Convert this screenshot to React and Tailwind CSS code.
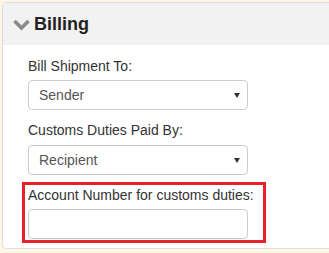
import React from "react";

function Caret() {
  return (
    <svg width="6" height="5" viewBox="0 0 6 5" className="block">
      <path d="M0 0 H6 L3 5 Z" fill="#333" />
    </svg>
  );
}

function SelectBox({ value }) {
  return (
    <div className="flex h-[30px] w-[220px] items-center justify-between rounded-[4px] border border-[#cccccc] bg-white pl-[10px] pr-[7px] text-[14px] text-[#555555]">
      <span>{value}</span>
      <Caret />
    </div>
  );
}

export default function App() {
  return (
    <div
      className="h-[253px] w-[329px] overflow-hidden bg-[#fcf7e4] pl-[2px] pt-[2px]"
      style={{ fontFamily: '"Liberation Sans", Arial, sans-serif' }}
    >
      <div className="w-[340px] rounded-l-[4px] border border-[#dddddd] bg-white">
        <div className="flex h-[42px] items-center bg-[#f2f2f2] pl-[10px]">
          <svg width="17" height="12" viewBox="0 0 17 12" className="mr-[4px] mt-[2px]">
            <polyline
              points="1.5,2 8.5,9 15.5,2"
              fill="none"
              stroke="#8a8a8a"
              strokeWidth="3.6"
              strokeLinecap="butt"
            />
          </svg>
          <span className="text-[18px] font-bold leading-[42px] text-[#222222]">Billing</span>
        </div>
        <div className="pb-[5px] pl-[19px] pt-[11px]">
          <div className="pl-[6px]">
            <div className="mb-[4px] text-[14px] leading-[20px] text-[#333333]">Bill Shipment To:</div>
            <SelectBox value="Sender" />
            <div className="mb-[5px] mt-[10px] text-[14px] leading-[20px] text-[#333333]">
              Customs Duties Paid By:
            </div>
            <SelectBox value="Recipient" />
          </div>
          <div className="mt-[7px] w-[244px] border-[3px] border-[#e8202a] pb-[1px] pl-[3px]">
            <div className="mb-[4px] text-[14px] leading-[20px] text-[#333333]">
              Account Number for customs duties:
            </div>
            <div className="h-[30px] w-[220px] rounded-[4px] border border-[#cccccc] bg-white" />
          </div>
        </div>
      </div>
    </div>
  );
}
